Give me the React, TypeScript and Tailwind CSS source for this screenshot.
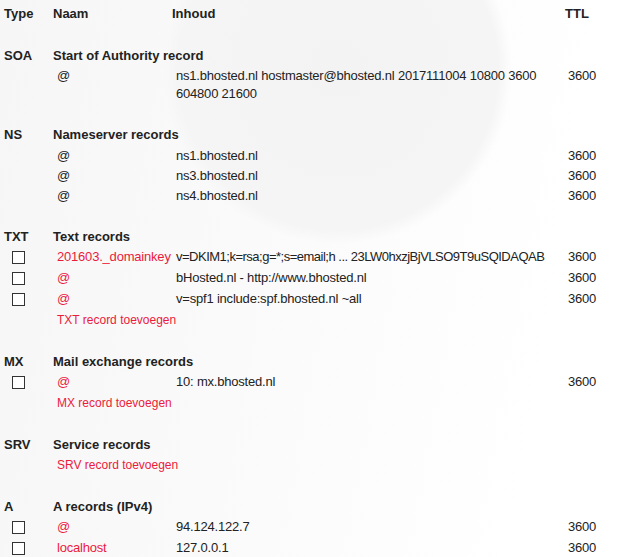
type Rec = { name: string; value: string; ttl?: string; check?: boolean; tight?: boolean }
type Section = { type: string; title: string; rows: Rec[]; add?: string }

const sections: Section[] = [
    {
        type: 'SOA',
        title: 'Start of Authority record',
        rows: [{ name: '@', value: 'ns1.bhosted.nl hostmaster@bhosted.nl 2017111004 10800 3600 604800 21600', ttl: '3600' }],
    },
    {
        type: 'NS',
        title: 'Nameserver records',
        rows: [
            { name: '@', value: 'ns1.bhosted.nl', ttl: '3600' },
            { name: '@', value: 'ns3.bhosted.nl', ttl: '3600' },
            { name: '@', value: 'ns4.bhosted.nl', ttl: '3600' },
        ],
    },
    {
        type: 'TXT',
        title: 'Text records',
        rows: [
            { name: '201603._domainkey', value: 'v=DKIM1;k=rsa;g=*;s=email;h ... 23LW0hxzjBjVLSO9T9uSQIDAQAB', ttl: '3600', check: true, tight: true },
            { name: '@', value: 'bHosted.nl - http://www.bhosted.nl', ttl: '3600', check: true },
            { name: '@', value: 'v=spf1 include:spf.bhosted.nl ~all', ttl: '3600', check: true },
        ],
        add: 'TXT record toevoegen',
    },
    {
        type: 'MX',
        title: 'Mail exchange records',
        rows: [{ name: '@', value: '10: mx.bhosted.nl', ttl: '3600', check: true }],
        add: 'MX record toevoegen',
    },
    { type: 'SRV', title: 'Service records', rows: [], add: 'SRV record toevoegen' },
    {
        type: 'A',
        title: 'A records (IPv4)',
        rows: [
            { name: '@', value: '94.124.122.7', ttl: '3600', check: true },
            { name: 'localhost', value: '127.0.0.1', ttl: '3600', check: true },
        ],
    },
]

const grid = 'grid grid-cols-[49px_119px_393px_1fr]'

const App = () => {
    return (
        <div className="min-h-[557px] bg-[radial-gradient(circle_at_338px_70px,#f3f3f3_0px,#f5f5f5_160px,rgba(255,255,255,0)_174px),linear-gradient(100deg,#f6f6f6_0%,#fafafa_40%,#ffffff_85%)] pt-[4px] text-[13px] leading-5 text-[#222] [font-family:'Liberation_Sans',Arial,sans-serif]">
            {/* Kolomkoppen */}
            <div className={`${grid} h-5 font-bold`}>
                <div className="pl-1">Type</div>
                <div className="pl-1">Naam</div>
                <div className="pl-1">Inhoud</div>
                <div className="pl-1">TTL</div>
            </div>

            {sections.map((s, i) => (
                <div key={s.type} className={i === 0 ? 'mt-[22px]' : 'mt-[21px]'}>
                    <div className={`${grid} h-5 font-bold`}>
                        <div className="pl-1">{s.type}</div>
                        <div className="col-span-3 pl-1">{s.title}</div>
                    </div>

                    {/* SOA: meerregelig */}
                    {s.type === 'SOA' &&
                        s.rows.map((r, j) => (
                            <div key={j} className={`${grid} pt-px pb-px leading-[18px] tracking-[-0.2px]`}>
                                <div />
                                <div className="pl-2">{r.name}</div>
                                <div className="pl-2">{r.value}</div>
                                <div className="pl-[7px]">{r.ttl}</div>
                            </div>
                        ))}

                    {s.type === 'NS' &&
                        s.rows.map((r, j) => (
                            <div key={j} className={`${grid} h-5 tracking-[-0.2px] ${j === 0 ? 'mt-px' : ''}`}>
                                <div />
                                <div className="pl-2">{r.name}</div>
                                <div className="pl-2">{r.value}</div>
                                <div className="pl-[7px]">{r.ttl}</div>
                            </div>
                        ))}

                    {s.type !== 'SOA' &&
                        s.type !== 'NS' &&
                        s.rows.map((r, j) => (
                            <div key={j} className={`${grid} h-[21px] items-center pb-[2px] tracking-[-0.2px]`}>
                                <div className="flex items-center pl-3">
                                    <span className="block h-[13px] w-[13px] border border-[#333] bg-white" />
                                </div>
                                <div className="pl-2 whitespace-nowrap text-[#ec1a3b]">{r.name}</div>
                                <div className={`pl-2 whitespace-nowrap ${r.tight ? 'tracking-[-0.5px]' : ''}`}>{r.value}</div>
                                <div className="pl-[7px]">{r.ttl}</div>
                            </div>
                        ))}

                    {s.add && (
                        <div className={`${grid} h-[21px] pt-px leading-[18px]`}>
                            <div />
                            <div className="col-span-3 pl-2 text-[12px] text-[#ec1a3b]">{s.add}</div>
                        </div>
                    )}
                </div>
            ))}
        </div>
    )
}

export default App
